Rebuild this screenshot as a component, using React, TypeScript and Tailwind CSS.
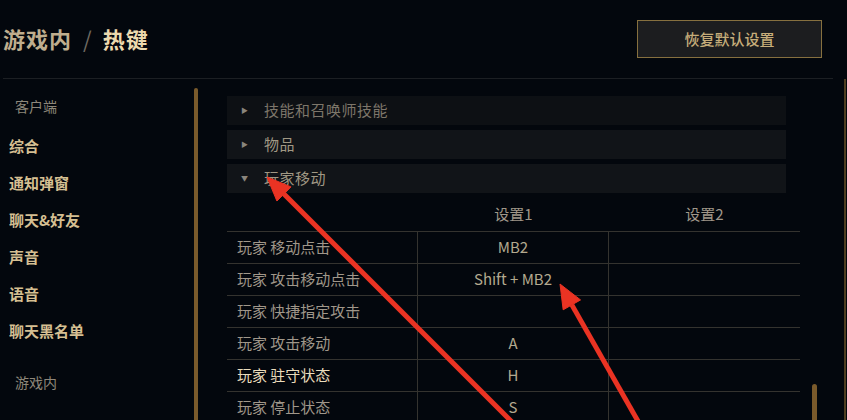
import React from 'react'

const clientItems = ['综合', '通知弹窗', '聊天&好友', '声音', '语音', '聊天黑名单']

const rows: { name: string; key1: string; hot?: boolean }[] = [
  { name: '玩家 移动点击', key1: 'MB2' },
  { name: '玩家 攻击移动点击', key1: 'Shift + MB2' },
  { name: '玩家 快捷指定攻击', key1: '' },
  { name: '玩家 攻击移动', key1: 'A' },
  { name: '玩家 驻守状态', key1: 'H', hot: true },
  { name: '玩家 停止状态', key1: 'S' },
]

const sections = [
  { label: '技能和召唤师技能', open: false, faded: true },
  { label: '物品', open: false },
  { label: '玩家移动', open: true },
]

function Arrow({ tail, tip }: { tail: [number, number]; tip: [number, number] }) {
  const dx = tip[0] - tail[0]
  const dy = tip[1] - tail[1]
  const len = Math.hypot(dx, dy)
  const ux = dx / len
  const uy = dy / len
  const bx = tip[0] - ux * 24
  const by = tip[1] - uy * 24
  const px = -uy * 10
  const py = ux * 10
  return (
    <g fill="#ea3323" stroke="#ea3323">
      <line x1={tail[0]} y1={tail[1]} x2={bx} y2={by} strokeWidth={5} />
      <polygon points={`${tip[0]},${tip[1]} ${bx + px},${by + py} ${bx - px},${by - py}`} strokeWidth={1} />
    </g>
  )
}

export default function App() {
  return (
    <div className="relative w-[847px] h-[420px] overflow-hidden bg-[#03070d] flex flex-col font-['Noto_Sans_CJK_SC','Noto_Sans',sans-serif]">
      {/* Header */}
      <div className="h-[79px] shrink-0 flex items-center justify-between ml-[3px] mr-[14px] pr-[11px] border-b border-[#1c1f23]">
        <div className="flex items-center text-[22px] font-bold leading-none -mt-[2px]">
          <span className="text-[#bfae8e] tracking-[1px]">游戏内</span>
          <span className="text-[#6f6a62] mx-[11px] font-normal">/</span>
          <span className="text-[#ecd9ae] tracking-[1px]">热键</span>
        </div>
        <button className="w-[185px] h-[38px] bg-[#1c1d1f] border border-[#86703f] text-[#c6ad7a] text-[15px] font-medium">
          恢复默认设置
        </button>
      </div>

      <div className="flex-1 flex min-h-0">
        {/* Sidebar */}
        <div className="w-[194px] flex flex-col">
          <div className="mt-[17px] pl-[15px] h-[20px] leading-[20px] text-[14px] text-[#8e877a]">客户端</div>
          <div className="mt-[12px] flex flex-col">
            {clientItems.map((it) => (
              <div key={it} className="h-[37px] flex items-center pl-[9px] text-[15px] font-bold text-[#d5bf92]">
                {it}
              </div>
            ))}
          </div>
          <div className="mt-[22px] pl-[15px] h-[20px] leading-[20px] text-[14px] text-[#8e877a]">游戏内</div>
          <div className="mt-[26px] h-[37px] flex items-center pl-[9px] text-[15px] font-bold text-[#efe2c4]">热键</div>
        </div>
        <div className="w-[4px] mt-[9px] rounded-t-full bg-[#7a5a2b]" />

        {/* Content */}
        <div className="w-[614px] pl-[29px] flex flex-col">
          <div className="flex flex-col gap-[5px] mt-[17px]">
            {sections.map((s) => (
              <div
                key={s.label}
                className={
                  s.faded
                    ? 'w-[559px] h-[29px] flex items-center bg-[#0d1014] text-[#7d766a]'
                    : 'w-[559px] h-[29px] flex items-center bg-[#111418] text-[#a09884]'
                }
              >
                <span className="w-[37px] pl-[14px] text-[7px] text-[#8a857c]">{s.open ? '▼' : '▶'}</span>
                <span className="text-[15px] tracking-[0.5px]">{s.label}</span>
              </div>
            ))}
          </div>

          <div className="w-[573px]">
            <div className="h-[39px] grid grid-cols-[191px_191px_191px] items-center text-[15px] text-[#a0978a] border-b border-[#34332f]">
              <div />
              <div className="text-center pt-[4px]">设置1</div>
              <div className="text-center pt-[4px]">设置2</div>
            </div>
            {rows.map((r) => (
              <div key={r.name} className="h-[32px] grid grid-cols-[191px_191px_191px] border-b border-[#34332f] text-[15px]">
                <div className={r.hot ? 'flex items-center pl-[10px] text-[#eadcbc] border-r border-[#34332f]' : 'flex items-center pl-[10px] text-[#a0978a] border-r border-[#34332f]'}>
                  {r.name}
                </div>
                <div className="flex items-center justify-center text-[#b3a98f] border-r border-[#34332f] whitespace-pre">{r.key1}</div>
                <div />
              </div>
            ))}
          </div>
        </div>

        {/* Content scrollbar */}
        <div className="w-[5px] flex flex-col">
          <div className="mt-[305px] flex-1 rounded-t-full bg-[#7a5a2b]" />
        </div>
        <div className="w-[27px]" />
        <div className="w-[2px] bg-[#4e3e20]" />
        <div className="w-[1px]" />
      </div>

      {/* Annotation arrows */}
      <svg className="absolute inset-0 pointer-events-none" width={847} height={420}>
        <Arrow tail={[525, 435]} tip={[267, 177]} />
        <Arrow tail={[643, 430]} tip={[560, 284]} />
      </svg>
    </div>
  )
}
